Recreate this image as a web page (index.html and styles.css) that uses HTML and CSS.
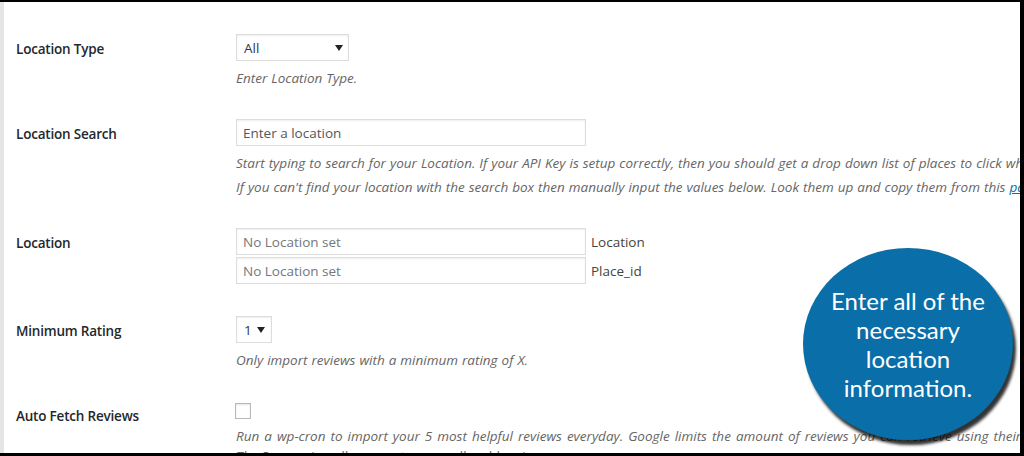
FILE: index.html
```html
<!DOCTYPE html>
<html lang="en">
<head>
    <meta charset="UTF-8">
    <meta name="viewport" content="width=device-width, initial-scale=1.0">
    <title>Reviews Settings</title>
    <link rel="stylesheet" href="styles.css">
</head>
<body>
    <div class="frame">
        <div class="form-table">
            <div class="row">
                <div class="label">Location Type</div>
                <div class="field">
                    <div class="select select-type">
                        <span>All</span>
                        <svg class="arrow" width="8" height="6" viewBox="0 0 8 6"><path d="M0 0 L8 0 L4 6 Z" fill="#222"/></svg>
                    </div>
                    <p class="description">Enter Location Type.</p>
                </div>
            </div>
            <div class="row">
                <div class="label">Location Search</div>
                <div class="field">
                    <input class="text-input search-input" type="text" placeholder="Enter a location">
                    <p class="description">Start typing to search for your Location. If your API Key is setup correctly, then you should get a drop down list of places to click when you find yours.</p>
                    <p class="description">If you can't find your location with the search box then manually input the values below. Look them up and copy them from this <a href="#">page</a>.</p>
                </div>
            </div>
            <div class="row row-location">
                <div class="label">Location</div>
                <div class="field">
                    <div class="input-line">
                        <input class="text-input" type="text" placeholder="No Location set">
                        <span class="input-note">Location</span>
                    </div>
                    <div class="input-line">
                        <input class="text-input" type="text" placeholder="No Location set">
                        <span class="input-note">Place_id</span>
                    </div>
                </div>
            </div>
            <div class="row">
                <div class="label">Minimum Rating</div>
                <div class="field">
                    <div class="select select-rating">
                        <span>1</span>
                        <svg class="arrow" width="8" height="6" viewBox="0 0 8 6"><path d="M0 0 L8 0 L4 6 Z" fill="#222"/></svg>
                    </div>
                    <p class="description">Only import reviews with a minimum rating of X.</p>
                </div>
            </div>
            <div class="row">
                <div class="label">Auto Fetch Reviews</div>
                <div class="field">
                    <div class="checkbox"></div>
                    <p class="description wide">Run a wp-cron to import your 5 most helpful reviews everyday. Google limits the amount of reviews you can retrieve using their API.</p>
                    <p class="description tight">The Pro version allows you to manually add reviews.</p>
                </div>
            </div>
        </div>

        <!-- callout bubble -->
        <div class="callout">
            <span>Enter all of the necessary location information.</span>
        </div>
    </div>
</body>
</html>
```

FILE: styles.css
```css
body {
    margin: 0;
    background-color: #000000;
}
.frame {
    position: relative;
    width: 1016px;
    height: 451px;
    margin-top: 2px;
    border-left: 4px solid #e4e6e6;
    background-color: #ffffff;
    overflow: hidden;
    font-family: "Open Sans", "Noto Sans", sans-serif;
    color: #23282d;
}
.form-table {
    padding-top: 17px;
    padding-left: 12px;
}
.row {
    display: flex;
    padding: 15px 0 14px 0;
}
.row-location {
    padding-bottom: 15px;
}
.label {
    width: 220px;
    flex-shrink: 0;
    margin-top: -15px;
    padding-top: 20px;
    line-height: 20px;
    font-size: 13.5px;
    font-weight: 600;
    letter-spacing: -0.2px;
}
.field {
    flex: 1;
    min-width: 0;
}
.select {
    display: flex;
    align-items: center;
    justify-content: space-between;
    box-sizing: border-box;
    height: 27px;
    padding: 0 7px;
    border: 1px solid #dddddd;
    box-shadow: inset 0 1px 2px rgba(0, 0, 0, 0.07);
    font-size: 13.5px;
    color: #32373c;
}
.select-type {
    width: 113px;
    padding-right: 5px;
}
.select-rating {
    width: 36px;
    padding-right: 6px;
}
.arrow {
    display: block;
}
.text-input {
    display: block;
    box-sizing: border-box;
    width: 350px;
    height: 27px;
    margin: 0;
    padding: 0 6px;
    border: 1px solid #dddddd;
    box-shadow: inset 0 1px 2px rgba(0, 0, 0, 0.07);
    font-family: "Open Sans", "Noto Sans", sans-serif;
    font-size: 13.5px;
    color: #32373c;
    outline: none;
}
.text-input::placeholder {
    color: #72777c;
}
.search-input::placeholder {
    color: #50575e;
}
.input-line {
    display: flex;
    align-items: center;
    margin-bottom: 2px;
}
.input-note {
    margin-left: 5px;
    font-size: 13.5px;
    color: #444444;
}
.description {
    margin: 5px 0 0 0;
    line-height: 24px;
    font-size: 13.5px;
    font-style: italic;
    word-spacing: 0.5px;
    color: #666666;
    white-space: nowrap;
}
.description + .description {
    margin-top: 0;
}
.description a {
    color: #0073aa;
}
.description.wide {
    word-spacing: 1.5px;
}
.description.tight {
    line-height: 16px;
}
.checkbox {
    box-sizing: border-box;
    width: 16px;
    height: 16px;
    margin-left: -1px;
    margin-top: 2px;
    border: 1px solid #b4b9be;
    box-shadow: inset 0 1px 2px rgba(0, 0, 0, 0.1);
}
.callout {
    position: absolute;
    left: 799px;
    top: 246px;
    width: 210px;
    height: 192px;
    border-radius: 50%;
    background-color: #0a6ea9;
    box-shadow: 3px 5px 3px rgba(0, 0, 0, 0.8);
    display: flex;
    align-items: center;
    justify-content: center;
    text-align: center;
}
.callout span {
    width: 160px;
    font-family: Lato, "Open Sans", sans-serif;
    font-size: 24px;
    line-height: 29px;
    color: #ffffff;
}
```
